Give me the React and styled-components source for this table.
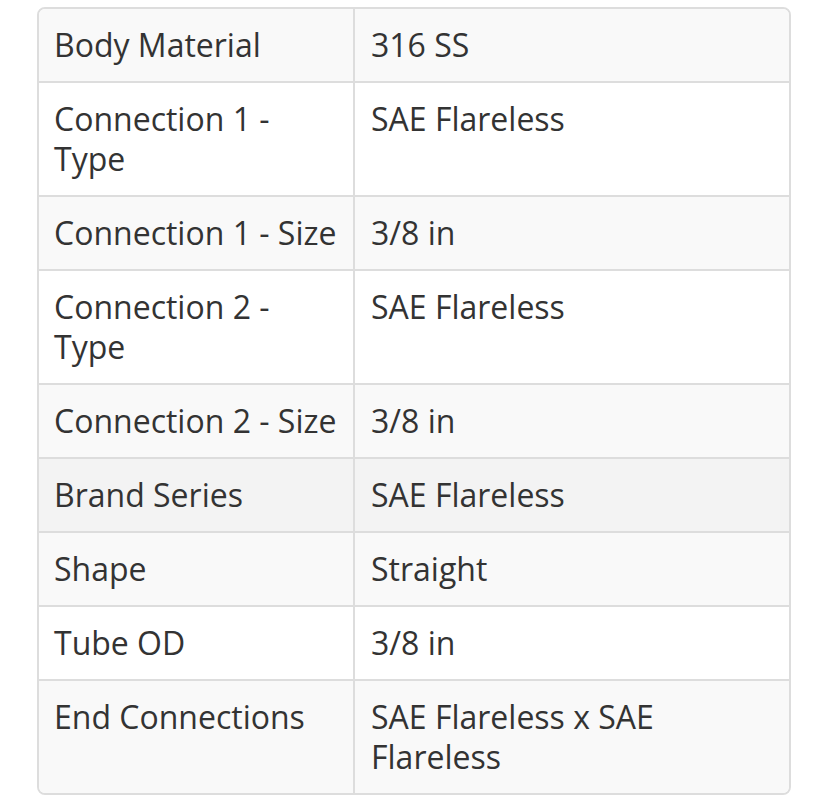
import styled, { createGlobalStyle } from "styled-components";

const GlobalStyle = createGlobalStyle`
  body {
    margin: 0;
    background: #ffffff;
    font-family: "Open Sans", "Liberation Sans", sans-serif;
  }
`;

const specs = [
  { label: "Body Material", value: "316 SS", shade: "#f9f9f9" },
  { label: "Connection 1 - Type", value: "SAE Flareless", shade: "#ffffff" },
  { label: "Connection 1 - Size", value: "3/8 in", shade: "#f9f9f9" },
  { label: "Connection 2 - Type", value: "SAE Flareless", shade: "#ffffff" },
  { label: "Connection 2 - Size", value: "3/8 in", shade: "#f9f9f9" },
  { label: "Brand Series", value: "SAE Flareless", shade: "#f3f3f3" },
  { label: "Shape", value: "Straight", shade: "#f9f9f9" },
  { label: "Tube OD", value: "3/8 in", shade: "#ffffff" },
  { label: "End Connections", value: "SAE Flareless x SAE Flareless", shade: "#f9f9f9" },
];

const App = () => {
  return (
    <>
      <GlobalStyle />
      <Page>
        <SpecTable>
          <colgroup>
            <col style={{ width: "314px" }} />
            <col />
          </colgroup>
          <tbody>
            {specs.map((row, i) => (
              <Row key={row.label} $shade={row.shade}>
                <Cell $first={i === 0}>{row.label}</Cell>
                <Cell $first={i === 0} $value>
                  {row.value}
                </Cell>
              </Row>
            ))}
          </tbody>
        </SpecTable>
      </Page>
    </>
  );
};

const Page = styled.div`
  padding: 7px 0 0 37px;
`;

const SpecTable = styled.table`
  width: 754px;
  table-layout: fixed;
  border-collapse: separate;
  border-spacing: 0;
  border: 2px solid #dddddd;
  border-radius: 8px;
  overflow: hidden;
  color: #333333;
  font-size: 32px;
  line-height: 40px;
`;

const Row = styled.tr`
  background: ${(p) => p.$shade};
`;

const Cell = styled.td`
  padding: ${(p) => (p.$value ? "16px" : "16px 12px 16px 15px")};
  vertical-align: top;
  border-top: ${(p) => (p.$first ? "none" : "2px solid #dddddd")};
  border-left: ${(p) => (p.$value ? "2px solid #dddddd" : "none")};
`;

export default App;
